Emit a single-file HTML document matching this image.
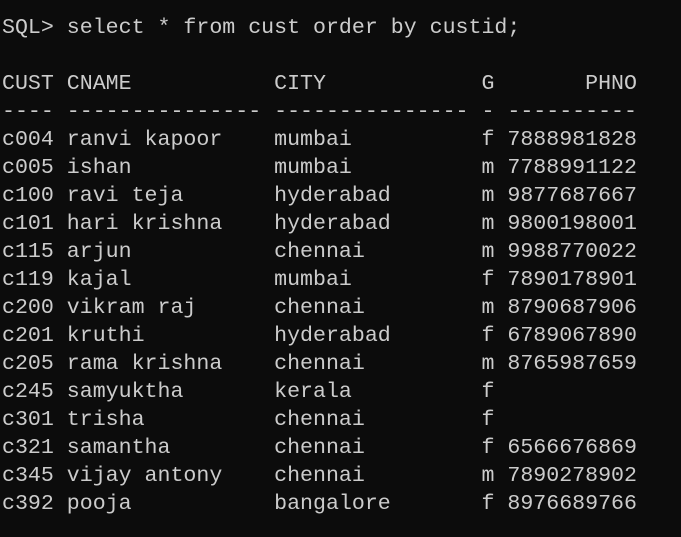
<!DOCTYPE html>
<html><head><meta charset="utf-8"><style>
html,body{margin:0;padding:0;background:#0c0c0c;width:681px;height:537px;overflow:hidden}
pre{margin:0;padding:14px 0 0 2px;font-family:"Liberation Mono",monospace;font-size:21.6px;line-height:28px;color:#cccccc;white-space:pre}
</style></head><body><pre>SQL&gt; select * from cust order by custid;

CUST CNAME           CITY            G       PHNO
---- --------------- --------------- - ----------
c004 ranvi kapoor    mumbai          f 7888981828
c005 ishan           mumbai          m 7788991122
c100 ravi teja       hyderabad       m 9877687667
c101 hari krishna    hyderabad       m 9800198001
c115 arjun           chennai         m 9988770022
c119 kajal           mumbai          f 7890178901
c200 vikram raj      chennai         m 8790687906
c201 kruthi          hyderabad       f 6789067890
c205 rama krishna    chennai         m 8765987659
c245 samyuktha       kerala          f
c301 trisha          chennai         f
c321 samantha        chennai         f 6566676869
c345 vijay antony    chennai         m 7890278902
c392 pooja           bangalore       f 8976689766</pre></body></html>
